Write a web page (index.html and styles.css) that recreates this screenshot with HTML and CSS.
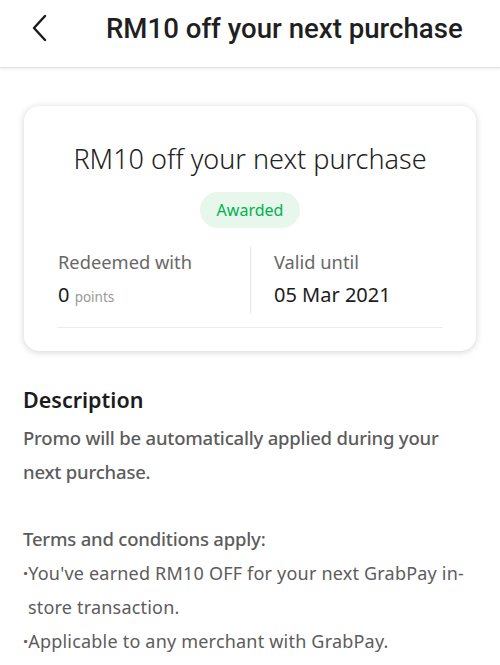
FILE: index.html
```html
<!DOCTYPE html>
<html>
<head>
    <title>RM10 off your next purchase</title>
    <link rel="stylesheet" href="styles.css">
</head>
<body>
    <!-- header -->
    <div class="header">
        <svg class="back" width="16" height="28" viewBox="0 0 16 28">
            <path d="M14 2 L3 14 L14 26" fill="none" stroke="#1a1a1a" stroke-width="2.4" stroke-linecap="round" stroke-linejoin="round"/>
        </svg>
        <div class="header-title">RM10 off your next purchase</div>
    </div>

    <!-- reward card -->
    <div class="card">
        <div class="card-title">RM10 off your next purchase</div>
        <div class="badge">Awarded</div>
        <div class="info">
            <div class="info-col">
                <div class="label">Redeemed with</div>
                <div class="value">0 <span class="unit">points</span></div>
            </div>
            <div class="info-col">
                <div class="label">Valid until</div>
                <div class="value">05 Mar 2021</div>
            </div>
        </div>
    </div>

    <!-- description -->
    <div class="desc">
        <h2>Description</h2>
        <p>Promo will be automatically applied during your<br>next purchase.</p>
        <p class="terms">Terms and conditions apply:</p>
        <div class="bullet"><span class="dot">&middot;</span>You've earned RM10 OFF for your next GrabPay in-<br>&nbsp;store transaction.</div>
        <div class="bullet"><span class="dot">&middot;</span>Applicable to any merchant with GrabPay.</div>
    </div>
</body>
</html>
```

FILE: styles.css
```css
body {
    margin: 0;
    padding: 0;
    background-color: white;
    font-family: "Noto Sans", "Open Sans", sans-serif;
    color: #1c1c1c;
}
.header {
    display: flex;
    align-items: center;
    height: 67px;
    padding: 0 0 0 31px;
    border-bottom: 1px solid #e2e2e2;
    box-shadow: 0 1px 3px rgba(0,0,0,0.08);
}
.back {
    flex: 0 0 auto;
    margin-top: -12px;
}
.header-title {
    margin-left: 59px;
    margin-top: -10px;
    font-family: Roboto, sans-serif;
    font-weight: 500;
    font-size: 27.6px;
    color: #1f1f1f;
}
.card {
    margin: 38px 24px 0 24px;
    padding: 37px 33px 23px 33px;
    border-radius: 15px;
    box-shadow: 0 1px 7px rgba(0,0,0,0.18);
    text-align: center;
}
.card-title {
    font-size: 27px;
    font-weight: 300;
    line-height: 32px;
    color: #222;
}
.badge {
    display: inline-block;
    margin-top: 17px;
    padding: 5px 17px;
    border-radius: 18px;
    background-color: #e7f7ec;
    color: #00b14f;
    font-size: 16px;
    line-height: 26px;
}
.info {
    display: grid;
    grid-template-columns: 1fr 1fr;
    margin-top: 19px;
    padding-bottom: 14px;
    border-bottom: 1px solid #ececec;
    text-align: left;
}
.info-col {
    padding: 2px 0 2px 1px;
}
.info-col + .info-col {
    border-left: 1px solid #e6e6e6;
    padding-left: 23px;
}
.label {
    font-size: 18.3px;
    line-height: 26px;
    color: #676767;
}
.value {
    margin-top: 6px;
    font-size: 20px;
    line-height: 28px;
    color: #1c1c1c;
}
.unit {
    font-size: 13.5px;
    color: #999;
}
.desc {
    padding: 32px 23px 0 23px;
}
h2 {
    margin: 0;
    font-size: 21.5px;
    font-weight: 600;
    line-height: 34px;
    color: #1c1c1c;
}
.desc p {
    margin: 4px 0 0 0;
    font-size: 18.5px;
    font-weight: 500;
    letter-spacing: -0.2px;
    line-height: 34px;
    color: #5c5c5c;
}
.desc p.terms {
    margin-top: 33px;
}
.bullet {
    font-size: 18px;
    letter-spacing: 0.2px;
    line-height: 34px;
    color: #5c5c5c;
}
.dot {
    font-weight: 700;
}
```
